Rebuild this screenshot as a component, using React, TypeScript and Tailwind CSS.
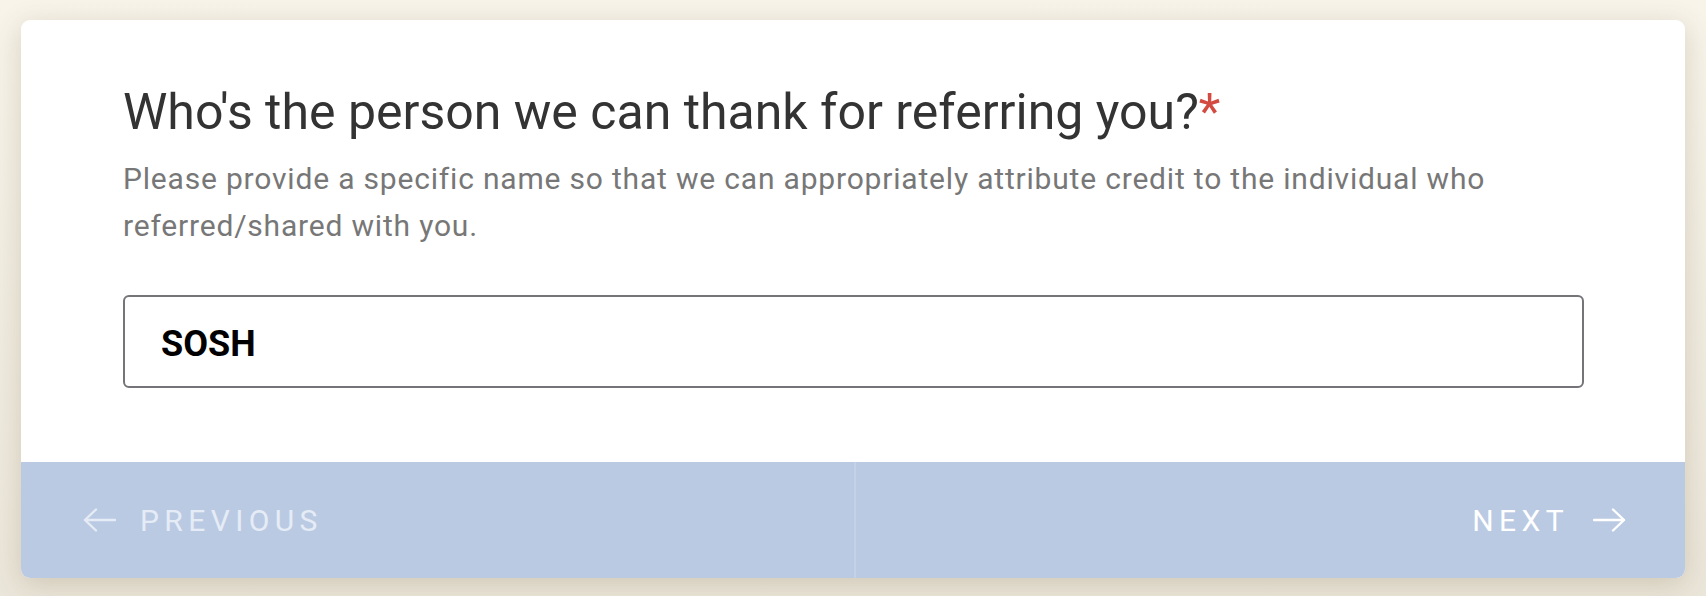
import type { ReactNode } from "react";

function Arrow({ dir }: { dir: "left" | "right" }) {
    // long thin arrow, head drawn as a 90° chevron
    const d = dir === "left"
        ? "M2 12H32 M13 1.5 2 12 13 22.5"
        : "M1 12H31 M20 1.5 31 12 20 22.5";
    return (
        <svg width="33" height="24" viewBox="0 0 33 24" fill="none"
             stroke="currentColor" strokeWidth="2.4"
             strokeLinecap="round" strokeLinejoin="round">
            <path d={d} />
        </svg>
    );
}

function NavButton({ children, align }: { children: ReactNode; align: "left" | "right" }) {
    return (
        <button type="button"
                className={align === "left"
                    ? "flex-1 flex items-center gap-6 pl-[62px] text-[#e6ecf6]"
                    : "flex-1 flex items-center justify-end gap-6 pr-[59px] text-white"}>
            {children}
        </button>
    );
}

export default function App() {
    return (
        <div className="min-h-[596px] bg-gradient-to-b from-[#f8f4ea] to-[#ebe6da]
                        px-[21px] pt-[20px] pb-[18px]
                        font-['Roboto','Liberation_Sans',sans-serif]">

            {/* Card */}
            <div className="bg-white rounded-[9px] overflow-hidden
                            shadow-[0_6px_28px_rgba(95,75,35,0.2)]">

                {/* Question body */}
                <div className="pt-[62px] pb-[74px] pl-[102px] pr-[101px]">
                    <h1 className="text-[50px] leading-[60px] text-[#333333]">
                        Who's the person we can thank for referring you?
                        <span className="text-[#d24a40]">*</span>
                    </h1>

                    <p className="mt-[13px] text-[30px] leading-[47px] tracking-[0.027em] text-[#777777]">
                        Please provide a specific name so that we can appropriately attribute credit to the individual who referred/shared with you.
                    </p>

                    <input type="text"
                           defaultValue="SOSH"
                           className="mt-[46px] block w-full h-[93px]
                                      border-2 border-[#747479] rounded-[6px]
                                      pl-[36px] pt-[4px]
                                      text-[36px] font-bold text-black outline-none" />
                </div>

                {/* Footer navigation */}
                <div className="flex h-[116px] bg-[#bbcae3]">
                    <NavButton align="left">
                        <Arrow dir="left" />
                        <span className="text-[30px] tracking-[0.18em]">PREVIOUS</span>
                    </NavButton>

                    <div className="w-[2px] bg-[#c4d1e7]" />

                    <NavButton align="right">
                        <span className="text-[30px] tracking-[0.18em]">NEXT</span>
                        <Arrow dir="right" />
                    </NavButton>
                </div>
            </div>
        </div>
    );
}
